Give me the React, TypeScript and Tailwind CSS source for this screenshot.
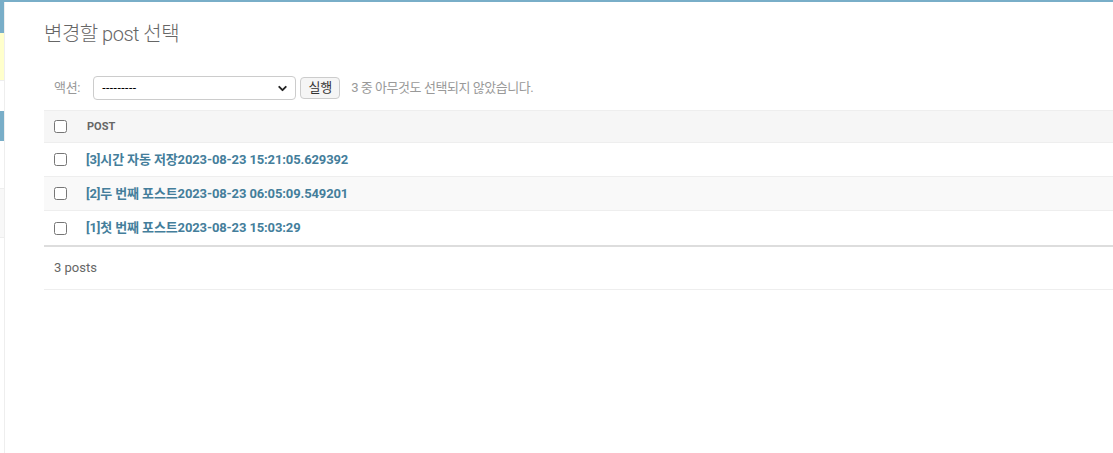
import { ChevronDown } from "lucide-react";

export default function App() {
  const posts = [
    "[3]시간 자동 저장2023-08-23 15:21:05.629392",
    "[2]두 번째 포스트2023-08-23 06:05:09.549201",
    "[1]첫 번째 포스트2023-08-23 15:03:29",
  ];

  return (
    <div
      className="h-[453px] w-[1113px] overflow-hidden bg-white flex flex-col"
      style={{ fontFamily: 'Roboto, "Noto Sans CJK KR", sans-serif' }}
    >
      <div className="h-[2px] bg-[#79aec8] shrink-0" />
      <div className="flex flex-1">
        {/* collapsed nav sidebar */}
        <div className="w-[5px] border-r border-[#eee] flex flex-col shrink-0">
          <div className="h-[31px] bg-[#79aec8]" />
          <div className="h-[48px] bg-[#ffc] border-b border-[#eee]" />
          <div className="h-[30px]" />
          <div className="h-[30px] bg-[#79aec8]" />
          <div className="h-[48px] border-b border-[#eee]" />
          <div className="h-[49px] bg-[#f8f8f8] border-b border-[#eee]" />
        </div>

        <div className="flex-1 pl-[39px] pt-[20px]">
          <h1 className="text-[20px] leading-[24px] font-light text-[#666] mb-[20px] tracking-[-0.5px]">변경할 post 선택</h1>

          <div className="h-[44px] flex items-center pl-[10px] text-[13px] text-[#999]">
            <span className="tracking-[-0.3px]">액션:</span>
            <div className="ml-[13px] w-[203px] h-[24px] border border-[#ccc] rounded-[4px] flex items-center justify-between pl-[8px] pr-[6px] bg-white">
              <span className="text-[12px] text-black tracking-[0.5px]">---------</span>
              <ChevronDown className="w-[13px] h-[13px] text-[#222]" strokeWidth={3.5} />
            </div>
            <button className="ml-[4px] h-[22px] w-[40px] border border-[#ccc] rounded-[4px] bg-[#f5f5f5] text-[#333] text-[13px] tracking-[-0.3px]">
              실행
            </button>
            <span className="ml-[11px] tracking-[-0.45px]">3 중 아무것도 선택되지 않았습니다.</span>
          </div>

          <div className="border-b-2 border-[#ddd]">
            <div className="h-[33px] flex items-center bg-[#f6f6f6] border-t border-b border-[#eee]">
              <input type="checkbox" className="ml-[10px] w-[13px] h-[13px]" />
              <span className="ml-[20px] mt-[2px] text-[11px] font-bold text-[#666] uppercase">Post</span>
            </div>
            {posts.map((p, i) => (
              <div
                key={i}
                className={`h-[34px] flex items-center border-b border-[#eee] last:border-b-0 ${i % 2 === 1 ? "bg-[#f9f9f9]" : "bg-white"}`}
              >
                <input type="checkbox" className="ml-[10px] w-[13px] h-[13px]" />
                <a className="ml-[19px] text-[13px] font-bold text-[#447e9b] tracking-[-0.12px]">{p}</a>
              </div>
            ))}
          </div>

          <div className="h-[43px] flex items-center pl-[10px] text-[13px] text-[#666] border-b border-[#eee]">
            3 posts
          </div>
        </div>
      </div>
    </div>
  );
}
